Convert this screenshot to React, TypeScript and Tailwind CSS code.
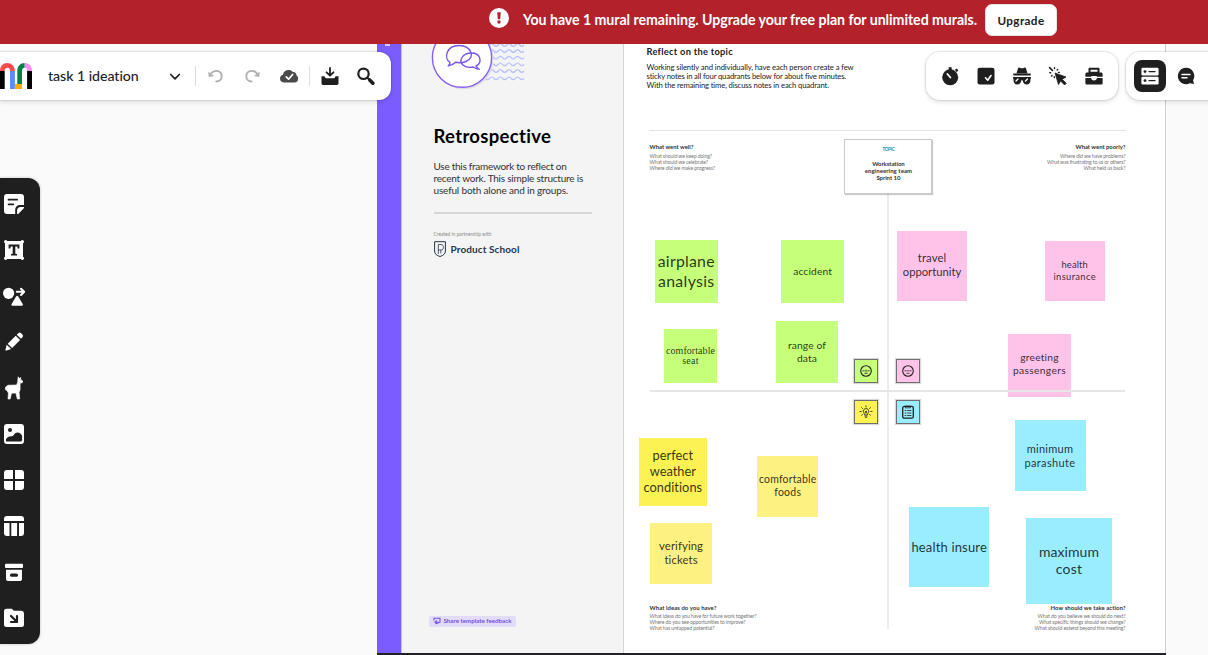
import { useLayoutEffect, useRef, useState, type ReactNode } from "react";

/** One line of canvas text, tracked so that it fills the given width. */
function Line({ w, children, className = "" }: { w: number; children: string; className?: string }) {
  const ref = useRef<HTMLSpanElement>(null);
  const [tracking, setTracking] = useState(0);
  useLayoutEffect(() => {
    const el = ref.current;
    if (!el) return;
    el.style.letterSpacing = "0px";
    const natural = el.getBoundingClientRect().width;
    const next = (w - natural) / children.length;
    el.style.letterSpacing = `${next}px`;
    setTracking(next);
  }, [w, children]);
  return (
    <span className={`block whitespace-nowrap ${className}`}>
      <span ref={ref} className="inline-block" style={{ letterSpacing: tracking }}>
        {children}
      </span>
    </span>
  );
}

type Row = [text: string, width: number];

const notes: { box: string; text: string; rows: Row[] }[] = [
  { box: "left-[655px] top-[196.4px] size-[62.5px] bg-[#c6ff7a]", text: "text-[15.8px] leading-[20px] pb-[1.5px]", rows: [["airplane", 57], ["analysis", 56.5]] },
  { box: "left-[781.4px] top-[196px] size-[62.5px] bg-[#c6ff7a]", text: "text-[10.3px] leading-[13px]", rows: [["accident", 39]] },
  { box: "left-[663.7px] top-[285.4px] size-[53.6px] bg-[#c6ff7a]", text: "font-['Liberation_Serif',serif] text-[10px] leading-[10px] pb-[1px]", rows: [["comfortable", 49], ["seat", 16.5]] },
  { box: "left-[775.7px] top-[276.8px] size-[62.5px] bg-[#c6ff7a]", text: "text-[10.3px] leading-[13px]", rows: [["range of", 38], ["data", 20]] },
  { box: "left-[897px] top-[187px] size-[70px] bg-[#ffc2e8]", text: "text-[11.3px] leading-[14px] pb-[2px]", rows: [["travel", 28.5], ["opportunity", 58.5]] },
  { box: "left-[1045px] top-[197.4px] size-[59.5px] bg-[#ffc2e8]", text: "text-[9.4px] leading-[12px]", rows: [["health", 26.5], ["insurance", 42.5]] },
  { box: "left-[1008px] top-[289.8px] size-[63px] bg-[#ffc2e8]", text: "text-[10.3px] leading-[13px] pb-[2px]", rows: [["greeting", 38.5], ["passengers", 53]] },
  { box: "left-[1014.5px] top-[376px] size-[71px] bg-[#9aecff]", text: "text-[11px] leading-[14px]", rows: [["minimum", 46.5], ["parashute", 51]] },
  { box: "left-[909px] top-[463px] size-[80.4px] bg-[#9aecff]", text: "text-[13px] leading-[16px]", rows: [["health insure", 75.5]] },
  { box: "left-[1026px] top-[474px] size-[86px] bg-[#9aecff]", text: "text-[14px] leading-[17px] pb-[2px]", rows: [["maximum", 60], ["cost", 26.5]] },
  { box: "left-[639px] top-[394.3px] size-[67.6px] bg-[#fcf254]", text: "text-[12.8px] leading-[16px] pb-[1.5px]", rows: [["perfect", 40.5], ["weather", 46], ["conditions", 59]] },
  { box: "left-[757px] top-[412px] size-[61.4px] bg-[#fcf181]", text: "text-[10.5px] leading-[13px] pb-[1px]", rows: [["comfortable", 57.5], ["foods", 27]] },
  { box: "left-[650.4px] top-[479px] size-[61.4px] bg-[#fcf181]", text: "text-[11.3px] leading-[14px] pb-[2px]", rows: [["verifying", 44], ["tickets", 33.5]] },
];

function Prompt({ title, rows, right = false }: { title: Row; rows: Row[]; right?: boolean }) {
  return (
    <div className={right ? "text-right" : "text-left"}>
      <Line w={title[1]} className="text-[5.9px] font-bold leading-[8px] text-[#333]">{title[0]}</Line>
      <div className="mt-[1.5px] text-[5.2px] leading-[6px] text-[#777]">
        {rows.map(([t, w]) => (
          <Line key={t} w={w}>{t}</Line>
        ))}
      </div>
    </div>
  );
}

function Glyph({ children, className = "" }: { children: ReactNode; className?: string }) {
  return (
    <svg viewBox="0 0 20 20" className={`size-5 shrink-0 ${className}`} fill="currentColor">
      {children}
    </svg>
  );
}

const stroke = { fill: "none", stroke: "currentColor", strokeLinecap: "round", strokeLinejoin: "round" } as const;

function Banner() {
  return (
    <div className="flex h-11 shrink-0 items-start bg-[#b3212b] pl-[489px] text-white">
      <svg viewBox="0 0 20 20" className="mt-2 size-5">
        <circle cx="10" cy="10" r="10" fill="#fff" />
        <path d="M8.2 4.2h3.6l-.6 7H8.8z" fill="#b3212b" />
        <circle cx="10" cy="14" r="1.7" fill="#b3212b" />
      </svg>
      <Line w={454} className="ml-[14px] mt-[10px] text-[14.2px] font-bold leading-5">
        You have 1 mural remaining. Upgrade your free plan for unlimited murals.
      </Line>
      <button className="ml-2 mt-1 flex h-8 w-[72px] items-center justify-center rounded-[7px] border border-[#e6e6e6] bg-white pb-px text-[#222]">
        <Line w={47} className="text-[11.7px] font-bold leading-4">Upgrade</Line>
      </button>
    </div>
  );
}

function Logo() {
  return (
    <svg viewBox="0 0 32 26" className="h-[26px] w-8">
      <path d="M0 8h4.7v18H0z" fill="#000" />
      <path d="M0 8C0 3 3 0 7.2 0S14.8 3 14.8 8H10c0-2-.8-3.2-2.7-3.2S4.700 6 4.700 8z" fill="#ff4b4b" />
      <path d="M10 8h4.900v18H10z" fill="#5b8cff" />
      <path d="M14.900 21H22v5h-7.100z" fill="#ffab00" />
      <path d="M17.300 21V8c0-5 3-8 7.400-8v4.800c-1.800 0-2.700 1.200-2.700 3.200v13z" fill="#00813f" />
      <path d="M24.700 0C29 0 32 3 32 8h-4.900c0-2-.7-3.200-2.400-3.200z" fill="#ff8cf5" />
      <path d="M27.100 8H32v18h-4.900z" fill="#000" />
    </svg>
  );
}

function TitleBar() {
  return (
    <div className="absolute left-0 top-2 flex h-12 w-[391px] items-center rounded-r-[12px] bg-white pb-px text-[#1f1f1f] shadow-[0_0_1px_1px_rgba(0,0,0,0.09),0_2px_5px_rgba(0,0,0,0.12)]">
      <Logo />
      <Line w={91} className="ml-4 text-[14.2px] font-medium leading-5 text-[#222]">task 1 ideation</Line>
      <Glyph className="ml-[26px]">
        <path d="M5.700 8.500l4.300 4.400 4.300-4.400" {...stroke} strokeWidth="1.700" />
      </Glyph>
      <div className="ml-[10px] h-5 w-px bg-[#dcdcdc]" />
      <Glyph className="ml-[10px] text-[#b0b0b0]">
        <path d="M5.200 7.200C9.500 2.800 15.700 5.300 15.700 10.200c0 3.400-2.400 5.300-5.400 5.300" {...stroke} strokeWidth="1.900" />
        <path d="M2.200 5.800l.6 5.200 5.400-1.100z" />
      </Glyph>
      <Glyph className="ml-4 text-[#b0b0b0]">
        <path d="M14.800 7.200C10.500 2.800 4.300 5.300 4.300 10.200c0 3.400 2.400 5.300 5.400 5.300" {...stroke} strokeWidth="1.900" />
        <path d="M17.800 5.800l-.6 5.200-5.400-1.100z" />
      </Glyph>
      <Glyph className="ml-[17px] text-[#4a4a4a]">
        <path d="M4.800 16.500A4 4 0 0 1 1 12.600c0-2 1.200-3.400 3-3.800C4.300 5.800 6.700 4 9.500 4c2 0 3.200.6 4.200 2 2.500-.2 3.900 1.300 3.800 3.600 1.200.7 1.700 1.800 1.600 3.200a3.700 3.700 0 0 1-3.700 3.700z" />
        <path d="M7.300 10.900l2.300 2.300 4-4.700" {...stroke} stroke="#fff" strokeWidth="1.700" />
      </Glyph>
      <div className="ml-[10px] h-5 w-px bg-[#dcdcdc]" />
      <Glyph className="ml-[10px]">
        <path d="M1.500 10.300h2.200c.8 0 1 .4 1.300 1 .3.700.7 1 1.500 1h7c.8 0 1.200-.3 1.500-1s.5-1 1.300-1h2.200v7c0 1-.6 1.700-1.600 1.700H3.100c-1 0-1.600-.7-1.600-1.700z" />
        <path d="M10 2v7M6.500 6.300L10 9.500l3.500-3.200" {...stroke} strokeWidth="1.800" />
      </Glyph>
      <Glyph className="ml-4">
        <circle cx="7.500" cy="7.800" r="5.200" {...stroke} strokeWidth="2.200" />
        <path d="M11.300 11.800l1.700 1.500" {...stroke} strokeWidth="2" />
        <path d="M13.700 14l3.200 3.200" {...stroke} strokeWidth="3.600" />
      </Glyph>
    </div>
  );
}

const panel = "absolute top-2 flex h-12 items-center bg-white text-[#1f1f1f] shadow-[0_0_1px_1px_rgba(0,0,0,0.09),0_2px_5px_rgba(0,0,0,0.12)]";

function RightBars() {
  return (
    <>
      <div className={`${panel} left-[926px] w-48 justify-center gap-4 rounded-[14px]`}>
        <Glyph>
          <circle cx="10.200" cy="11.300" r="8" />
          <path d="M8.700 1.300h3v3h-3zM14.800 3.800l2-1.200 1.400 1.600-1.300 2z" />
          <path d="M7.400 8l3 3.500" {...stroke} stroke="#fff" strokeWidth="1.800" />
        </Glyph>
        <Glyph>
          <rect x="1.500" y="1.700" width="17" height="16.800" rx="2.300" />
          <path d="M9.500 11.800l2.200 2.400 3.300-4.700" {...stroke} stroke="#fff" strokeWidth="1.600" />
        </Glyph>
        <Glyph>
          <path d="M4.500 7.300L6 2.400c.3-.9 1-1.100 1.800-.7 1.500.7 2.900.7 4.400 0 .8-.4 1.500-.2 1.800.7l1.500 4.900zM1.300 7.600h17.400v1.900H1.300z" />
          <path d="M1 11h18v1.600h-.6c.5 3.700-1 5.900-3.700 5.900-2.500 0-3.700-1.700-4.100-4.300H9.400c-.4 2.600-1.600 4.300-4.100 4.300-2.700 0-4.200-2.200-3.700-5.900H1z" />
          <path d="M4 15l2-2M13.500 15l2-2" {...stroke} stroke="#fff" strokeWidth="1.200" />
        </Glyph>
        <Glyph>
          <path d="M7 7l11 4-3.800 2.300 4 4-1.600 1.700-4.100-4.100-2 3.700z" strokeWidth=".8" stroke="currentColor" strokeLinejoin="round" />
          <path d="M1.600 1.600l2.900 2.900" {...stroke} strokeWidth="1.600" />
          <path d="M6.500 1.600v.9M9.700 3.500l-.5.500M11.300 6.400h-.8M1.800 6.800h.9M3.500 10l.6-.5M6.300 11.500v-.9" {...stroke} strokeWidth="1.400" />
        </Glyph>
        <Glyph>
          <path d="M5.500 2.800h9v4h-9z" {...stroke} strokeWidth="2" />
          <path d="M3 6.500h14c1 0 1.600.6 1.600 1.600v2.700H13v-.6H7v.6H1.400V8.100c0-1 .6-1.600 1.600-1.600zM1.400 12H7c.3 1.600 1.400 2.500 3 2.500s2.700-.9 3-2.500h5.600v5c0 1-.6 1.500-1.600 1.500H3c-1 0-1.600-.5-1.600-1.500z" />
          <path d="M8.300 10h3.400v2.300c-.6.900-2.800.9-3.400 0z" fill="#fff" />
        </Glyph>
      </div>
      <div className={`${panel} left-[1126px] w-24 rounded-l-[14px] pl-2`}>
        <div className="flex size-8 items-center justify-center rounded-[8px] bg-[#1f1f1f] text-white">
          <Glyph>
            <rect x="1.400" y="1.700" width="17.200" height="7.800" rx="1.300" />
            <rect x="1.400" y="10.700" width="17.200" height="7.800" rx="1.300" />
            <path d="M9 5.600h6M9 14.600h6" {...stroke} stroke="#1f1f1f" strokeWidth="1.400" />
            <circle cx="5" cy="5.600" r="1.400" fill="#1f1f1f" />
            <circle cx="5" cy="14.600" r="1.400" fill="#1f1f1f" />
          </Glyph>
        </div>
        <Glyph className="ml-[10px]">
          <path d="M10 1.800a8.200 8.200 0 1 0 3.800 15.500l4.200.7-.9-3.800A8.200 8.200 0 0 0 10 1.800z" />
          <path d="M6 8.400h8M6 11.700h5" {...stroke} stroke="#fff" strokeWidth="1.500" />
        </Glyph>
      </div>
    </>
  );
}

function SideBar() {
  const dark = "#1f1f1f";
  return (
    <div className="absolute left-0 top-[134px] flex h-[466px] w-10 flex-col items-start gap-[26px] rounded-r-[12px] bg-[#1f1f1f] pl-1 pt-4 text-white shadow-[0_0_3px_rgba(0,0,0,0.25)]">
      <Glyph>
        <path d="M3 0h14c2 0 3 1 3 3v8h-3.500c-3.500 0-5.300 2-5.300 5.300V20H3c-2 0-3-1-3-3V3c0-2 1-3 3-3z" />
        <path d="M20 13v1l-5.700 6h-1.200v-3.300c0-2.500 1.300-3.700 3.600-3.700z" />
        <path d="M4.500 5.700h8.700M4.500 10.300h4.800" {...stroke} stroke={dark} strokeWidth="1.700" />
      </Glyph>
      <Glyph>
        <path d="M1 1h18v18H1z" />
        <circle cx="1.700" cy="1.700" r="1.700" />
        <circle cx="18.300" cy="1.700" r="1.700" />
        <circle cx="1.700" cy="18.300" r="1.700" />
        <circle cx="18.300" cy="18.300" r="1.700" />
        <path d="M4.600 4.600h10.800v3.800h-1.700l-.4-2h-2v7.400l1.700.3v1.500H7v-1.500l1.700-.3V6.400h-2l-.4 2H4.600z" fill={dark} />
      </Glyph>
      <svg viewBox="0 0 22 20" className="-ml-px h-5 w-[22px] shrink-0" fill="currentColor">
        <circle cx="5.600" cy="7.300" r="5.600" />
        <path d="M13.100 10.500c.6-1 1.500-1 2.100 0l4.500 7.600c.5 1 .1 1.600-.9 1.600H9.500c-1 0-1.400-.6-.9-1.600z" />
        <path d="M13.800 5.800H21M18 2.700l3.200 3.100L18 9" {...stroke} strokeWidth="2" />
      </svg>
      <Glyph>
        <path d="M12.700 2.700l1.600-1.500c1-.9 1.900-.9 2.800 0l1.300 1.300c.9.9.9 1.900 0 2.800L17 6.800zM11.700 3.700l4.400 4.200-8 8-4.400-4.200zM2.700 12.800l4.400 4.300-4.500 1.500c-.9.300-1.300-.2-1.100-1z" />
      </Glyph>
      <svg viewBox="0 0 20 24" className="-my-[2px] h-6 w-5 shrink-0" fill="currentColor">
        <path d="M14.200.8l1.300 1.800 1.200-1.200v2l2 1.600-.4 1.700-2.200.5v6.500l-1 2.500.6 6.800h-2.400l-1.400-6-4.400.2L6.200 23H4l.4-6-1.700-2.800-1.300-.4.2-2.800 2.400-1.800 8.600-.2 1-2.600z" stroke="currentColor" strokeWidth=".6" strokeLinejoin="round" />
      </svg>
      <Glyph>
        <rect width="20" height="20" rx="3" />
        <circle cx="6" cy="6" r="2" fill={dark} />
        <path d="M2 17.500v-2.300c1.500-2.500 3.400-3.200 6-3 2-.3 2.300-3.700 5.500-3.700 2.500 0 3.500 1.500 4.600 3.200v4c0 1-.6 1.800-1.700 1.800z" fill={dark} />
      </Glyph>
      <Glyph>
        <path d="M3 0h6v9H0V3c0-2 1-3 3-3zM11 0h6c2 0 3 1 3 3v6h-9zM0 11h9v9H3c-2 0-3-1-3-3zM11 11h9v6c0 2-1 3-3 3h-6z" />
      </Glyph>
      <Glyph>
        <path d="M3 0h14c2 0 3 1 3 3v2H0V3c0-2 1-3 3-3zM0 7h5.500v13H3c-2 0-3-1-3-3zM7.300 7h5.800v13H7.300zM15 7h5v10c0 2-1 3-3 3h-2z" />
      </Glyph>
      <Glyph>
        <rect x="1" y="1.700" width="18" height="4.200" rx=".9" />
        <path d="M2 7.700h16v9c0 1.500-.8 2.300-2.300 2.300H4.300c-1.500 0-2.300-.8-2.300-2.300z" />
        <rect x="6" y="11.600" width="8" height="3.200" rx="1.600" fill={dark} />
      </Glyph>
      <Glyph>
        <path d="M2.500.7h5.300l2 2H17c2 0 3 1 3 3v10.800c0 1.700-1 2.500-2.500 2.500h-15C1 19 0 18.200 0 16.500V3.200C0 1.500 1 .7 2.500.7z" />
        <path d="M7 8l5.500 5.500M13 8v6H7" {...stroke} stroke={dark} strokeWidth="2.200" />
      </Glyph>
    </div>
  );
}

function Hero() {
  const rows = [1, 7, 13.7, 20.3, 27, 34.3];
  return (
    <svg viewBox="0 0 94 50" className="-ml-[3px] h-[50px] w-[94px] shrink-0 overflow-hidden">
      {rows.map((y) => (
        <path
          key={y}
          d={`M50 ${y}q2.150 -2.600 4.300 0t4.300 0t4.300 0t4.300 0t4.300 0t4.300 0t4.300 0t4.300 0t4.300 0t4.300 0`}
          fill="none"
          stroke="#b5bffb"
          strokeWidth="1.200"
        />
      ))}
      <circle cx="32.500" cy="15.200" r="30" fill="#dcdce0" />
      <circle cx="31" cy="13.700" r="29.600" fill="#fff" stroke="#8760f5" strokeWidth="1.400" />
      <g fill="none" stroke="#7a55f5" strokeWidth="1.400" strokeLinejoin="round">
        <path d="M19 18.500c-7-5-3-17 9-17s17 12 7 16c-3.500 1.400-7.500 1.500-10.500.8-2 2.200-4.500 3-7.200 3.500 1-1 1.500-2 1.700-3.300z" />
        <path d="M45 22c6.500-3 5-13-4.500-13S27.500 17 32 21c3 2.600 7 2.700 10.300 2 1.700 1.300 3.500 2 6 2.300-1.700-1-2.800-2-3.300-3.300z" />
      </g>
    </svg>
  );
}

function InfoColumn() {
  return (
    <div className="flex w-[221px] shrink-0 flex-col bg-[#f4f4f4] pl-8">
      <Hero />
      <Line w={118} className="mt-[30px] text-[18.5px] font-bold leading-6 text-black">Retrospective</Line>
      <div className="mt-3 text-[10px] leading-3 text-[#333]">
        <Line w={133}>Use this framework to reflect on</Line>
        <Line w={149.5}>recent work. This simple structure is</Line>
        <Line w={134.5}>useful both alone and in groups.</Line>
      </div>
      <div className="mt-4 h-[1.5px] w-[158px] bg-[#d6d6d6]" />
      <Line w={58} className="mt-[17px] text-[4.8px] leading-[6px] text-[#888]">Created in partnership with</Line>
      <div className="mt-[4px] flex h-4 items-center gap-[5px] text-[#26344c]">
        <svg viewBox="0 0 12 16" className="h-4 w-3" fill="none" stroke="currentColor" strokeWidth="1">
          <path d="M.6.700h10.800v9.300c0 2.800-2 4.500-5.400 5.500C2.600 14.500.6 12.800.6 10z" />
          <path d="M4.300 13V3.500h2.900c3 0 3 5.500 0 5.500H4.300M6.800 9v3.500" strokeWidth=".8" />
        </svg>
        <Line w={69} className="text-[10px] font-bold leading-4">Product School</Line>
      </div>
      <div className="-ml-[5px] mb-[26px] mt-auto flex h-[11.5px] w-[87px] items-center gap-[3px] rounded-[2px] bg-[#e3dcf8] pl-1 text-[#7352e0]">
        <svg viewBox="0 0 8 8" className="size-2" fill="none" stroke="currentColor" strokeWidth="1.100">
          <path d="M1 3.500V1.200h6v4H2.200M4 7l-2-1.800L4 3.500M5 5.200v1.900" />
        </svg>
        <Line w={68} className="text-[6.2px] font-bold leading-[8px]">Share template feedback</Line>
      </div>
    </div>
  );
}

function Worksheet() {
  return (
    <div className="flex flex-1 flex-col bg-white pl-[22.5px]">
      <Line w={86.5} className="mt-[2px] text-[9.3px] font-bold leading-3 text-[#222]">Reflect on the topic</Line>
      <div className="mt-[4.500px] text-[7.7px] leading-[9px] text-[#222]">
        <Line w={207}>Working silently and individually, have each person create a few</Line>
        <Line w={199.5}>sticky notes in all four quadrants below for about five minutes.</Line>
        <Line w={182.5}>With the remaining time, discuss notes in each quadrant.</Line>
      </div>
      <div className="ml-[2px] mt-[40px] h-[1.5px] w-[477px] bg-[#e4e4e4]" />
      <div className="ml-[3px] mt-[12px] flex w-[476px] justify-between">
        <Prompt title={["What went well?", 44]} rows={[["What should we keep doing?", 62.5], ["What should we celebrate?", 58.5], ["Where did we make progress?", 65.5]]} />
        <Prompt right title={["What went poorly?", 50]} rows={[["Where did we have problems?", 65.5], ["What was frustrating to us or others?", 78.5], ["What held us back?", 42]]} />
      </div>
      <div className="mb-[22px] ml-[3px] mt-auto flex w-[476px] justify-between">
        <Prompt title={["What ideas do you have?", 67]} rows={[["What ideas do you have for future work together?", 107], ["Where do you see opportunities to improve?", 96], ["What has untapped potential?", 65]]} />
        <Prompt right title={["How should we take action?", 75]} rows={[["What do you believe we should do next?", 88], ["What specific things should we change?", 86.5], ["What should extend beyond this meeting?", 91]]} />
      </div>
    </div>
  );
}

const marker = "absolute flex size-6 items-center justify-center border-[1.5px] border-[#6f6f6f] text-[#222] shadow-[0_0_1px_1px_rgba(0,0,0,0.15)]";

function Face({ frown = false }: { frown?: boolean }) {
  return (
    <svg viewBox="0 0 14 14" className="size-[14px]" {...stroke}>
      <circle cx="7" cy="7" r="5.300" strokeWidth="1.100" />
      <path d={frown ? "M3.800 6.800h1.400M8.800 6.800h1.400M6.500 6.800h1M5.800 9.300h2.400" : "M3.800 6.800h1.400M8.800 6.800h1.400M7 6v1.800M5.800 9.300h2.400"} strokeWidth=".8" />
    </svg>
  );
}

function Markers() {
  return (
    <>
      <div className={`${marker} left-[854px] top-[314.5px] bg-[#c6ff7a]`}><Face /></div>
      <div className={`${marker} left-[896px] top-[314.5px] bg-[#ffc2e8]`}><Face frown /></div>
      <div className={`${marker} left-[854px] top-[356px] bg-[#fcf254]`}>
        <svg viewBox="0 0 14 14" className="size-[14px]" {...stroke} strokeWidth=".8">
          <path d="M5.700 9.500c0-1.200-1.400-1.700-1.400-3.300C4.300 4.600 5.500 3.600 7 3.600s2.700 1 2.700 2.600c0 1.600-1.400 2.100-1.400 3.300zM5.900 11h2.200M6.300 12.300h1.400M6.400 6.300l.6 2 .6-2M7 .8v1.200M2.600 2.600l.9.900M11.400 2.600l-.9.900M.9 6.500h1.400M11.700 6.500h1.400M2.600 10.200l.9-.7M11.400 10.200l-.9-.7" />
        </svg>
      </div>
      <div className={`${marker} left-[896px] top-[356px] bg-[#9aecff]`}>
        <svg viewBox="0 0 14 14" className="size-[14px]" {...stroke}>
          <rect x="1.700" y="1.400" width="10.600" height="11.800" rx="1.600" strokeWidth="1.300" />
          <path d="M4.500 1.200h5v1.600h-5zM4 5.500h1M6.500 5.500H10M4 8h1M6.500 8H10M4 10.500h1M6.500 10.500H10" strokeWidth=".8" />
        </svg>
      </div>
    </>
  );
}

function Canvas() {
  return (
    <div className="relative flex-1 overflow-hidden bg-[#fafafa]">
      <div className="ml-[376.5px] flex h-[611px] w-[789px] flex-col">
        <div className="flex h-[609px] border-r border-[#cfcfcf]">
          <div className="w-6 shrink-0 bg-[#7b5cff] pl-2">
            <div className="h-[1.5px] w-[5px] bg-[#d6ccff]" />
          </div>
          <div className="w-px shrink-0 bg-[#c9bdfb]" />
          <InfoColumn />
          <div className="w-[1.5px] shrink-0 bg-[#d5d5d5]" />
          <Worksheet />
        </div>
        <div className="h-[2px] bg-[#222226]" />
      </div>

      <div className="absolute left-[886.5px] top-[150px] h-[435px] w-[2px] bg-[#ececec]" />
      <div className="absolute left-[844.4px] top-[95px] flex h-[55px] w-[88px] flex-col items-center border border-[#c9c9c9] bg-white pt-[6px] font-bold text-[#333] shadow-[1px_1px_1px_rgba(0,0,0,0.2)]">
        <Line w={12} className="text-[4.6px] leading-[6px] text-[#1794b8]">TOPIC</Line>
        <div className="mt-[8px] text-center text-[6px] leading-[7px]">
          <Line w={32.5}>Workstation</Line>
          <Line w={47.5}>engineering team</Line>
          <Line w={24}>Sprint 10</Line>
        </div>
      </div>

      {notes.map((n) => (
        <div key={n.box} className={`absolute flex flex-col items-center justify-center text-black/80 ${n.box} ${n.text}`}>
          {n.rows.map(([t, w]) => (
            <Line key={t} w={w}>{t}</Line>
          ))}
        </div>
      ))}
      <div className="absolute left-[650px] top-[346.4px] h-[2px] w-[474.5px] bg-[#e6e6e6]" />
      <Markers />

      <TitleBar />
      <RightBars />
      <SideBar />
    </div>
  );
}

export default function App() {
  return (
    <div className="flex h-[655px] w-[1208px] flex-col overflow-hidden font-['Lato',sans-serif]">
      <Banner />
      <Canvas />
    </div>
  );
}
